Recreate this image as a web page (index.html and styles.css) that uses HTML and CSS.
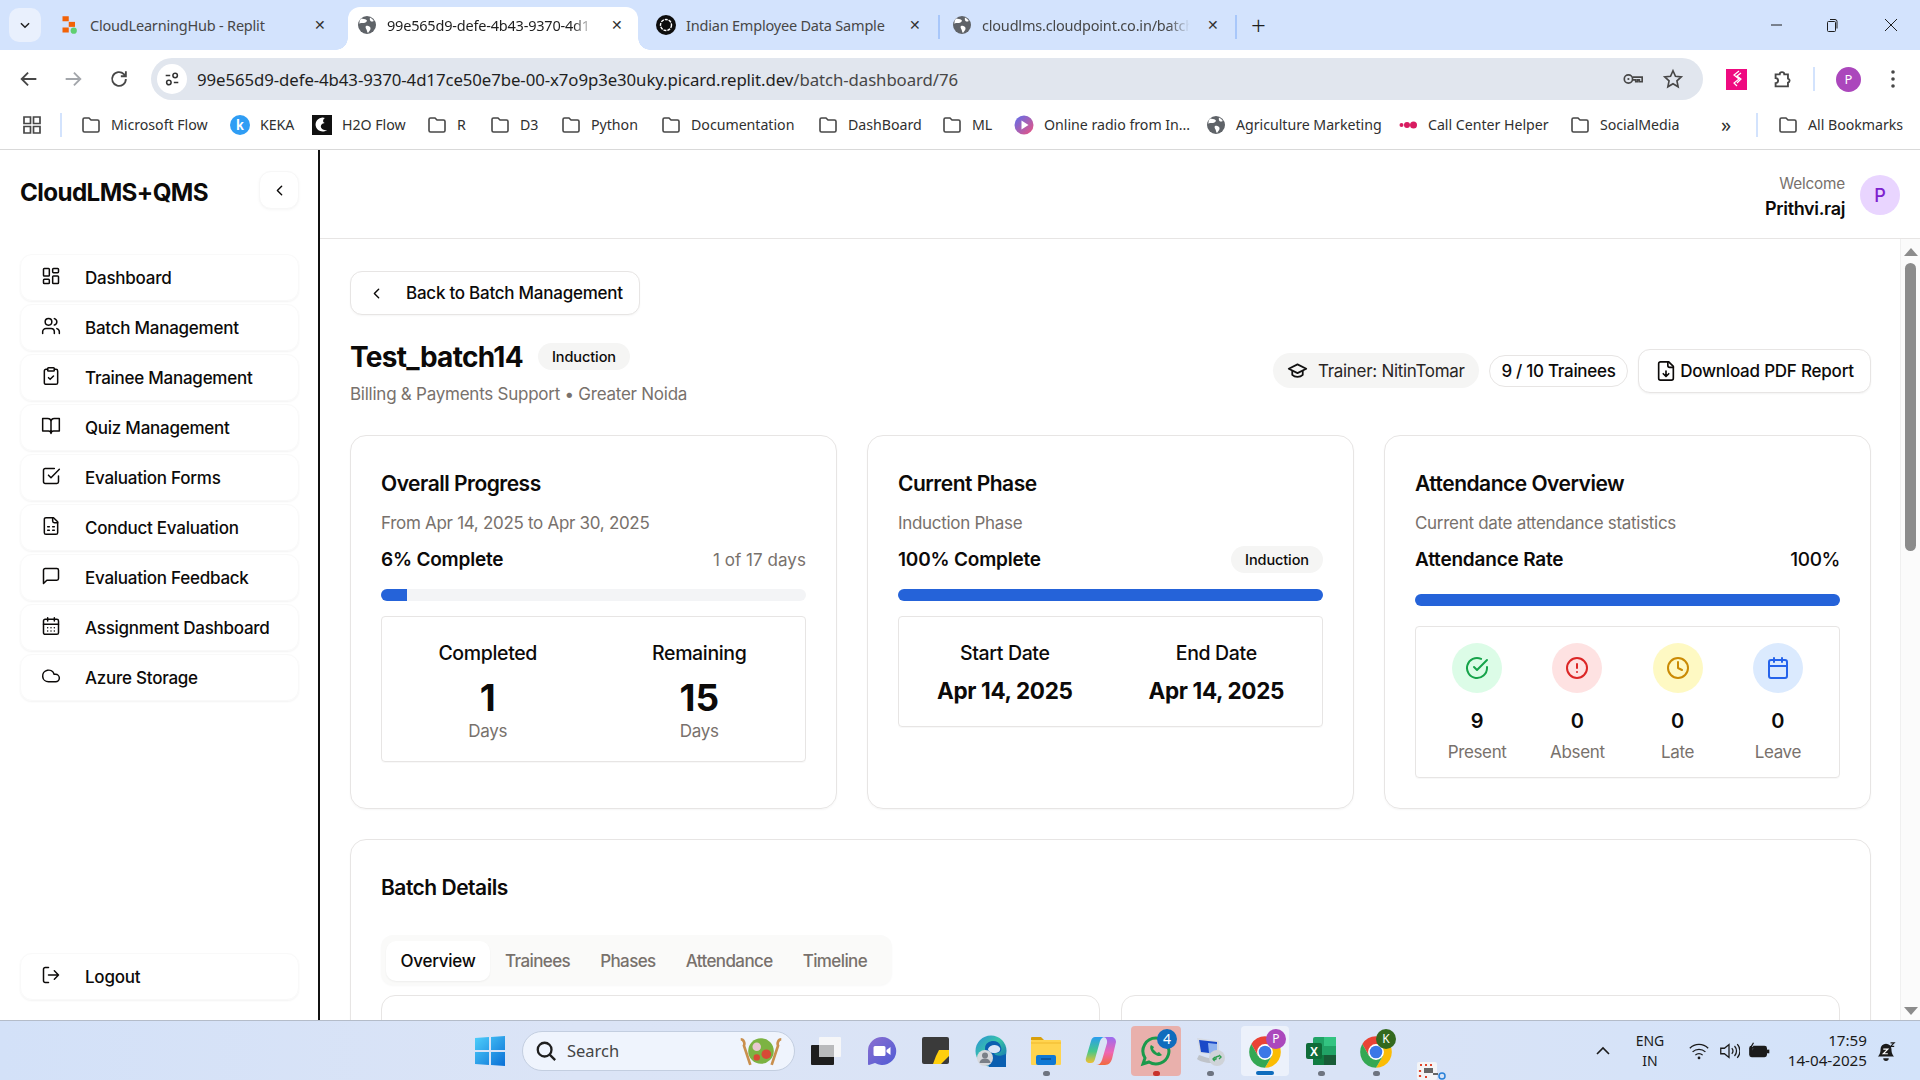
FILE: index.html
```html
<!DOCTYPE html>
<html lang="en">
<head>
<meta charset="utf-8">
<title>CloudLMS+QMS</title>
<link rel="stylesheet" href="styles.css">
</head>
<body>
<svg class="defs" aria-hidden="true">
  <symbol id="folder" viewBox="0 0 20 20"><path d="M2 4.5A1.5 1.5 0 0 1 3.5 3H8l2 2h6.500A1.500 1.500 0 0 1 18 6.500v9a1.500 1.500 0 0 1-1.500 1.500h-13A1.500 1.500 0 0 1 2 15.500z" fill="none" stroke="#474747" stroke-width="1.6"/></symbol>
  <symbol id="globe" viewBox="0 0 20 20"><circle cx="10" cy="10" r="9" fill="#5f6368"/><path d="M4 3.500c2 .5 4 0 5.500 1.500S8 8 6.500 8 3 7.500 2.500 9c-.3-2 .3-4 1.500-5.500zM9 11c2-.8 4 .2 4.500 2s-1.500 3.500-2.500 5c-1-1-1-2.500-1.500-3.500S8 12 9 11zM13 2.500c1.500.7 3 2 3.800 3.500-1 .5-2.500 1-3.300 0s-.8-2.500-.5-3.500z" fill="#fff"/></symbol>
  <symbol id="i-dash" viewBox="0 0 24 24"><rect x="3" y="3" width="7" height="9" rx="1"/><rect x="14" y="3" width="7" height="5" rx="1"/><rect x="14" y="12" width="7" height="9" rx="1"/><rect x="3" y="16" width="7" height="5" rx="1"/></symbol>
  <symbol id="i-users" viewBox="0 0 24 24"><path d="M16 21v-2a4 4 0 0 0-4-4H6a4 4 0 0 0-4 4v2"/><circle cx="9" cy="7" r="4"/><path d="M22 21v-2a4 4 0 0 0-3-3.870M16 3.130a4 4 0 0 1 0 7.750"/></symbol>
  <symbol id="i-clip" viewBox="0 0 24 24"><rect x="8" y="2" width="8" height="4" rx="1"/><path d="M16 4h2a2 2 0 0 1 2 2v14a2 2 0 0 1-2 2H6a2 2 0 0 1-2-2V6a2 2 0 0 1 2-2h2"/><path d="m9 14 2 2 4-4"/></symbol>
  <symbol id="i-book" viewBox="0 0 24 24"><path d="M2 3h6a4 4 0 0 1 4 4v14a3 3 0 0 0-3-3H2zM22 3h-6a4 4 0 0 0-4 4v14a3 3 0 0 1 3-3h7z"/></symbol>
  <symbol id="i-check" viewBox="0 0 24 24"><path d="m9 11 3 3L22 4"/><path d="M21 12v7a2 2 0 0 1-2 2H5a2 2 0 0 1-2-2V5a2 2 0 0 1 2-2h11"/></symbol>
  <symbol id="i-sheet" viewBox="0 0 24 24"><path d="M15 2H6a2 2 0 0 0-2 2v16a2 2 0 0 0 2 2h12a2 2 0 0 0 2-2V7Z"/><path d="M14 2v4a2 2 0 0 0 2 2h4M8 13h2M14 13h2M8 17h2M14 17h2"/></symbol>
  <symbol id="i-msg" viewBox="0 0 24 24"><path d="M21 15a2 2 0 0 1-2 2H7l-4 4V5a2 2 0 0 1 2-2h14a2 2 0 0 1 2 2z"/></symbol>
  <symbol id="i-cal-days" viewBox="0 0 24 24"><path d="M8 2v4M16 2v4"/><rect x="3" y="4" width="18" height="18" rx="2"/><path d="M3 10h18M8 14h.01M12 14h.01M16 14h.01M8 18h.01M12 18h.01M16 18h.01"/></symbol>
  <symbol id="i-cloud" viewBox="0 0 24 24"><path d="M17.500 19H9a7 7 0 1 1 6.710-9h1.790a4.500 4.500 0 1 1 0 9Z"/></symbol>
  <symbol id="i-logout" viewBox="0 0 24 24"><path d="M9 21H5a2 2 0 0 1-2-2V5a2 2 0 0 1 2-2h4M16 17l5-5-5-5M21 12H9"/></symbol>
  <symbol id="i-chev" viewBox="0 0 24 24"><path d="m15 18-6-6 6-6"/></symbol>
  <symbol id="chrome" viewBox="0 0 48 48"><path d="M6.680 14A20 20 0 0 1 41.320 14H24L15.340 29z" fill="#ea4335"/><path d="M41.320 14A20 20 0 0 1 24 44l8.660-15L24 14z" fill="#fbbc04"/><path d="M24 44A20 20 0 0 1 6.680 14l8.660 15h17.320z" fill="#34a853"/><circle cx="24" cy="24" r="10" fill="#fff"/><circle cx="24" cy="24" r="8" fill="#3b78e7"/></symbol>
</svg>

<header class="tabstrip">
  <button class="tab-menu"><svg width="14" height="14" viewBox="0 0 24 24" class="ic-dark"><path d="m5 9 7 7 7-7"/></svg></button>
  <div class="tab tab-one">
    <svg class="favicon" viewBox="0 0 16 16"><rect x="2" y="1" width="5" height="4" fill="#f26207"/><rect x="7" y="5.500" width="5" height="4" fill="#f26207"/><rect x="2" y="10" width="5" height="4" fill="#f26207"/><circle cx="11" cy="12.500" r="2.500" fill="#5fcf70"/></svg>
    <span class="tab-title">CloudLearningHub - Replit</span><span class="tab-x">✕</span>
  </div>
  <div class="tab tab-active">
    <svg class="favicon"><use href="#globe"/></svg>
    <span class="tab-title fade">99e565d9-defe-4b43-9370-4d1</span><span class="tab-x">✕</span>
  </div>
  <div class="tab tab-three">
    <svg class="favicon" viewBox="0 0 20 20"><circle cx="10" cy="10" r="10" fill="#0d0d0d"/><circle cx="10" cy="10" r="5.500" fill="none" stroke="#fff" stroke-width="1.400" stroke-dasharray="3 1"/></svg>
    <span class="tab-title">Indian Employee Data Sample</span><span class="tab-x">✕</span>
    <i class="tab-sep"></i>
  </div>
  <div class="tab tab-four">
    <svg class="favicon"><use href="#globe"/></svg>
    <span class="tab-title fade">cloudlms.cloudpoint.co.in/batch</span><span class="tab-x">✕</span>
    <i class="tab-sep"></i>
  </div>
  <span class="new-tab">+</span>
  <div class="win-ctrls">
    <svg viewBox="0 0 14 14"><path d="M1 7h11"/></svg>
    <svg viewBox="0 0 14 14"><rect x="2.500" y="3.500" width="8" height="10" rx="1"/><path d="M5 1.500h5a2 2 0 0 1 2 2v7"/></svg>
    <svg class="win-close" viewBox="0 0 14 14"><path d="M1 1l12 12M13 1 1 13"/></svg>
  </div>
</header>

<nav class="toolbar">
  <svg class="tb-ic tb-back" viewBox="0 0 24 24"><path d="M20 12H5M11 5l-7 7 7 7"/></svg>
  <svg class="tb-ic tb-fwd" viewBox="0 0 24 24"><path d="M4 12h15M13 5l7 7-7 7"/></svg>
  <svg class="tb-ic tb-reload" viewBox="0 0 24 24"><path d="M19.500 12a7.500 7.500 0 1 1-2.200-5.300L19.500 9M19.500 3.500V9H14"/></svg>
  <div class="omnibox">
    <span class="tune"><svg width="18" height="18" viewBox="0 0 20 20"><path d="M3 6h5M12 14h5" stroke="#333" stroke-width="1.700" fill="none"/><circle cx="13.500" cy="6" r="2.500" fill="none" stroke="#333" stroke-width="1.700"/><circle cx="6.500" cy="14" r="2.500" fill="none" stroke="#333" stroke-width="1.700"/></svg></span>
    <span class="url">99e565d9-defe-4b43-9370-4d17ce50e7be-00-x7o9p3e30uky.picard.replit.dev<span class="url-path">/batch-dashboard/76</span></span>
    <svg class="omni-key" viewBox="0 0 24 24"><circle cx="7" cy="12" r="4.500"/><circle cx="7" cy="12" r="1.200" fill="#474747" stroke="none"/><path d="M11.500 10H22v5h-3v-2h-2v2h-2v-2h-3.500"/></svg>
    <svg class="omni-star" viewBox="0 0 24 24"><path d="m12 3 2.700 6 6.300.7-4.700 4.300 1.300 6.500L12 17.200 6.400 20.500 7.700 14 3 9.700 9.300 9z"/></svg>
  </div>
  <div class="ext-pink"><svg width="14" height="18" viewBox="0 0 14 18"><path d="M9 1 4 5l5 4-5 4 3 3M11 3 7 6l4 3-4 4" fill="none" stroke="#fff" stroke-width="1.200"/></svg></div>
  <svg class="tb-ic tb-puzzle" viewBox="0 0 24 24"><path d="M5 7h4.500a2.500 2.500 0 0 1 5 0h4v4.500a2.300 2.300 0 0 1 0 4.500V20H5v-3.500a2.750 2.750 0 0 0 0-5.500z"/></svg>
  <i class="tb-sep"></i>
  <span class="tb-avatar">P</span>
  <svg class="tb-dots" viewBox="0 0 6 20"><circle cx="3" cy="3" r="1.800"/><circle cx="3" cy="10" r="1.800"/><circle cx="3" cy="17" r="1.800"/></svg>
</nav>

<div class="bookmarks">
  <svg class="bm-apps" viewBox="0 0 18 18"><path d="M1 1h6.500v6.500H1zM10.500 1H17v6.500h-6.500zM1 10.500h6.500V17H1zM10.500 10.500H17V17h-6.500z"/></svg>
  <i class="bm-sep"></i>
  <div class="bm-list">
    <a class="bm"><svg class="bm-ic"><use href="#folder"/></svg>Microsoft Flow</a>
    <a class="bm"><svg class="bm-ic" viewBox="0 0 20 20"><circle cx="10" cy="10" r="10" fill="#2f9df4"/><text x="10" y="14.500" text-anchor="middle" class="bm-k">k</text></svg>KEKA</a>
    <a class="bm"><svg class="bm-ic" viewBox="0 0 20 20"><rect width="20" height="20" fill="#111"/><path d="M13 3a7 7 0 1 0 2 12c-5 1-8-3-5-6 1-1 3-1 3-1-3-.5-2-4 0-5z" fill="#fff"/></svg>H2O Flow</a>
    <a class="bm"><svg class="bm-ic"><use href="#folder"/></svg>R</a>
    <a class="bm"><svg class="bm-ic"><use href="#folder"/></svg>D3</a>
    <a class="bm"><svg class="bm-ic"><use href="#folder"/></svg>Python</a>
    <a class="bm"><svg class="bm-ic"><use href="#folder"/></svg>Documentation</a>
    <a class="bm"><svg class="bm-ic"><use href="#folder"/></svg>DashBoard</a>
    <a class="bm"><svg class="bm-ic"><use href="#folder"/></svg>ML</a>
    <a class="bm"><svg class="bm-ic" viewBox="0 0 20 20"><defs><linearGradient id="radio" x1="0" y1="0" x2="1" y2="1"><stop offset="0" stop-color="#5a6ff0"/><stop offset="1" stop-color="#f0527c"/></linearGradient></defs><circle cx="10" cy="10" r="9.500" fill="url(#radio)"/><path d="M7.500 5.500v9l7-4.500z" fill="#fff"/></svg>Online radio from In...</a>
    <a class="bm"><svg class="bm-ic"><use href="#globe"/></svg>Agriculture Marketing</a>
    <a class="bm"><svg class="bm-ic" viewBox="0 0 20 20"><circle cx="3.500" cy="10" r="2" fill="#d81b60"/><circle cx="9" cy="10" r="3" fill="#d81b60"/><circle cx="15.500" cy="10" r="3.500" fill="#d81b60"/></svg>Call Center Helper</a>
    <a class="bm"><svg class="bm-ic"><use href="#folder"/></svg>SocialMedia</a>
  </div>
  <span class="bm-more">»</span>
  <i class="bm-sep"></i>
  <a class="bm bm-all"><svg class="bm-ic"><use href="#folder"/></svg>All Bookmarks</a>
</div>

<div class="app">
  <aside class="sidebar">
    <div class="brand">
      <span class="brand-name">CloudLMS+QMS</span>
      <button class="collapse"><svg class="ic ic-16"><use href="#i-chev"/></svg></button>
    </div>
    <ul class="nav">
      <li class="nav-item"><svg class="ic nav-ic"><use href="#i-dash"/></svg>Dashboard</li>
      <li class="nav-item"><svg class="ic nav-ic"><use href="#i-users"/></svg>Batch Management</li>
      <li class="nav-item"><svg class="ic nav-ic"><use href="#i-clip"/></svg>Trainee Management</li>
      <li class="nav-item"><svg class="ic nav-ic"><use href="#i-book"/></svg>Quiz Management</li>
      <li class="nav-item"><svg class="ic nav-ic"><use href="#i-check"/></svg>Evaluation Forms</li>
      <li class="nav-item"><svg class="ic nav-ic"><use href="#i-sheet"/></svg>Conduct Evaluation</li>
      <li class="nav-item"><svg class="ic nav-ic"><use href="#i-msg"/></svg>Evaluation Feedback</li>
      <li class="nav-item"><svg class="ic nav-ic"><use href="#i-cal-days"/></svg>Assignment Dashboard</li>
      <li class="nav-item"><svg class="ic nav-ic"><use href="#i-cloud"/></svg>Azure Storage</li>
    </ul>
    <div class="nav-item nav-logout"><svg class="ic nav-ic"><use href="#i-logout"/></svg>Logout</div>
  </aside>

  <div class="main">
    <div class="topbar">
      <div class="welcome"><span class="welcome-label">Welcome</span><span class="welcome-name">Prithvi.raj</span></div>
      <span class="avatar">P</span>
    </div>
    <div class="scroller">
      <div class="content">
        <button class="back-btn"><svg class="ic ic-16"><use href="#i-chev"/></svg>Back to Batch Management</button>
        <div class="page-head">
          <div>
            <div class="title-row"><h1>Test_batch14</h1><span class="badge badge-head">Induction</span></div>
            <p class="subtitle">Billing &amp; Payments Support • Greater Noida</p>
          </div>
          <div class="head-actions">
            <span class="pill-trainer"><svg class="cap" viewBox="0 0 24 24"><path d="M2 10l10-5 10 5-10 5z"/><path d="M6 12v5c3 3 9 3 12 0v-5"/></svg>Trainer: NitinTomar</span>
            <span class="pill-count">9 / 10 Trainees</span>
            <button class="download"><svg class="ic ic-22" viewBox="0 0 24 24"><path d="M15 2H6a2 2 0 0 0-2 2v16a2 2 0 0 0 2 2h12a2 2 0 0 0 2-2V7Z"/><path d="M14 2v4a2 2 0 0 0 2 2h4M12 18v-6M9 15l3 3 3-3"/></svg>Download PDF Report</button>
          </div>
        </div>

        <div class="cards">
          <section class="card">
            <h2>Overall Progress</h2>
            <p class="desc">From Apr 14, 2025 to Apr 30, 2025</p>
            <div class="row"><strong>6% Complete</strong><span class="muted">1 of 17 days</span></div>
            <div class="track"><div class="fill fill-six"></div></div>
            <div class="inner inner-two inner-tall">
              <div class="stat"><span class="stat-label">Completed</span><span class="stat-big">1</span><span class="muted">Days</span></div>
              <div class="stat"><span class="stat-label">Remaining</span><span class="stat-big">15</span><span class="muted">Days</span></div>
            </div>
          </section>
          <section class="card">
            <h2>Current Phase</h2>
            <p class="desc">Induction Phase</p>
            <div class="row"><strong>100% Complete</strong><span class="badge badge-phase">Induction</span></div>
            <div class="track"><div class="fill fill-full"></div></div>
            <div class="inner inner-two inner-short">
              <div class="stat"><span class="stat-label">Start Date</span><span class="stat-date">Apr 14, 2025</span></div>
              <div class="stat"><span class="stat-label">End Date</span><span class="stat-date">Apr 14, 2025</span></div>
            </div>
          </section>
          <section class="card">
            <h2>Attendance Overview</h2>
            <p class="desc">Current date attendance statistics</p>
            <div class="row row-att"><strong>Attendance Rate</strong><span class="pct">100%</span></div>
            <div class="track"><div class="fill fill-full"></div></div>
            <div class="inner inner-four">
              <div class="att"><span class="att-ic att-green"><svg class="ic ic-24" viewBox="0 0 24 24"><path d="M22 11.080V12a10 10 0 1 1-5.930-9.140"/><path d="M22 4 12 14.010l-3-3"/></svg></span><b>9</b><span class="muted">Present</span></div>
              <div class="att"><span class="att-ic att-red"><svg class="ic ic-24" viewBox="0 0 24 24"><circle cx="12" cy="12" r="10"/><path d="M12 8v4M12 16h.01"/></svg></span><b>0</b><span class="muted">Absent</span></div>
              <div class="att"><span class="att-ic att-yellow"><svg class="ic ic-24" viewBox="0 0 24 24"><circle cx="12" cy="12" r="10"/><path d="M12 6v6l4 2"/></svg></span><b>0</b><span class="muted">Late</span></div>
              <div class="att"><span class="att-ic att-blue"><svg class="ic ic-24" viewBox="0 0 24 24"><rect x="3" y="4" width="18" height="18" rx="2"/><path d="M16 2v4M8 2v4M3 10h18"/></svg></span><b>0</b><span class="muted">Leave</span></div>
            </div>
          </section>
        </div>

        <section class="card details">
          <h2>Batch Details</h2>
          <div class="tabs">
            <span class="tb tb-on">Overview</span><span class="tb">Trainees</span><span class="tb">Phases</span><span class="tb">Attendance</span><span class="tb">Timeline</span>
          </div>
          <div class="detail-grid"><div class="detail-card"></div><div class="detail-card"></div></div>
        </section>
      </div>
      <div class="scrollbar">
        <span class="sb-up"></span>
        <span class="sb-thumb"></span>
        <span class="sb-down"></span>
      </div>
    </div>
  </div>
</div>

<footer class="taskbar">
  <div class="task-center">
    <svg class="t-win" viewBox="0 0 30 30"><defs><linearGradient id="wn" x1="0" y1="0" x2="1" y2="1"><stop offset="0" stop-color="#4fd0fb"/><stop offset="1" stop-color="#0a6fd6"/></linearGradient></defs><path d="M0 2l14-1v13H0zM16 1l14-1v14H16zM0 16h14v13L0 28zM16 16h14v14l-14-1z" fill="url(#wn)"/></svg>
    <div class="search">
      <svg width="22" height="22" viewBox="0 0 24 24" class="ic-dark"><circle cx="10.500" cy="10.500" r="7.500"/><path d="m16 16 6 6"/></svg>
      <span>Search</span>
      <svg class="salad" viewBox="0 0 46 30"><path d="M4 4c3 0 4 4 3 6l6 18M42 4c-3 0-4 4-3 6l-6 18" stroke="#c98f4e" stroke-width="2.500" fill="none"/><circle cx="23" cy="15" r="12" fill="#7cb342"/><circle cx="19" cy="11" r="4" fill="#e8c8d0"/><circle cx="28" cy="18" r="4.500" fill="#d84a36"/><circle cx="19" cy="21" r="3" fill="#d84a36"/></svg>
    </div>
    <div class="t-slot"><svg class="t-ic" viewBox="0 0 32 32"><rect x="1" y="10" width="23" height="20" rx="1" fill="#1e1e1e"/><rect x="9" y="2" width="22" height="20" rx="1" fill="#f5f6f8"/><rect x="9" y="10" width="15" height="12" fill="#b9babc"/></svg></div>
    <div class="t-slot"><svg class="t-ic" viewBox="0 0 32 32"><defs><linearGradient id="mt" x1="0" y1="0" x2="1" y2="1"><stop offset="0" stop-color="#8b6fd0"/><stop offset="1" stop-color="#4f5bd5"/></linearGradient></defs><path d="M17 2a14 14 0 1 1-7 26l-6 2c-.6 0-1-.5-1-1v-13A14 14 0 0 1 17 2z" fill="url(#mt)"/><path d="M10 11h9a1.500 1.500 0 0 1 1.500 1.500v7A1.500 1.500 0 0 1 19 21h-9a1.500 1.500 0 0 1-1.500-1.500v-7A1.500 1.500 0 0 1 10 11zM21.500 15l4-3v8l-4-3z" fill="#fff"/></svg></div>
    <div class="t-slot"><svg class="t-ic" viewBox="0 0 32 32"><rect x="2" y="2" width="27" height="27" rx="2" fill="#3a3a3a"/><path d="M29 15v6l-8 8h-8l3-8 3-6z" fill="#ffcf0d"/></svg></div>
    <div class="t-slot"><svg class="t-ic" viewBox="0 0 32 32"><defs><linearGradient id="ed" x1="0" y1="0" x2="1" y2="1"><stop offset="0" stop-color="#2a8fd8"/><stop offset=".45" stop-color="#38c5a8"/><stop offset="1" stop-color="#0b5fb0"/></linearGradient></defs><circle cx="16" cy="16" r="15.500" fill="url(#ed)"/><path d="M10 14a8 7 0 0 1 16-2c2 5-3 7-7 6 1 3 6 4 12 1v13H14z" fill="#0b5fb0"/><path d="M13 14c2-5 10-5 12-1 1 3-2 5-6 5-3 0-6-2-6-4z" fill="#d9e4f7"/><path d="M24 22c3 1 5 0 7-1l-1 6-8 4z" fill="#0b5fb0"/><circle cx="10" cy="23" r="8" fill="#d6d8dc"/><circle cx="10" cy="20.500" r="3" fill="#7a7f87"/><path d="M4.500 28a5.500 4.500 0 0 1 11 0z" fill="#7a7f87"/></svg></div>
    <div class="t-slot t-dot"><svg class="t-ic" viewBox="0 0 32 32"><path d="M1 3a1 1 0 0 1 1-1h9l3 3h-13z" fill="#d9a00b"/><rect x="1" y="5" width="30" height="25" rx="1" fill="#ffd44f"/><path d="M1 8h30" stroke="#f0b92f"/><rect x="6" y="20" width="20" height="10" rx="2" fill="#0f78d4"/><path d="M11 24h10" stroke="#0a4f95" stroke-width="1.500"/></svg></div>
    <div class="t-slot"><svg class="t-ic" viewBox="0 0 32 32"><defs><linearGradient id="co" x1="0" y1="0" x2="0" y2="1"><stop offset="0" stop-color="#9a6cf0"/><stop offset=".55" stop-color="#ee66b4"/><stop offset="1" stop-color="#f26b3c"/></linearGradient><linearGradient id="co2" x1="0" y1="0" x2="0" y2="1"><stop offset="0" stop-color="#2a9df0"/><stop offset=".55" stop-color="#46c88a"/><stop offset="1" stop-color="#f0c030"/></linearGradient></defs><path d="M10 2h10c-3 0-4 2-5 4l-5 18c-1 3-2 4-4 4H5c-3 0-5-2-4-5L6 6c1-3 2-4 4-4z" fill="url(#co2)"/><path d="M18 2h8c3 0 5 2 5 5l-4 17c-1 3-3 6-7 6H11c3 0 5-2 6-5l5-17c.7-3-1-6-4-6z" fill="url(#co)"/></svg></div>
    <div class="t-slot t-whatsapp t-dot-red">
      <svg class="t-ic" viewBox="0 0 32 32"><path d="M16 3a13 13 0 0 0-11 20l-2 6 6-2a13 13 0 1 0 7-24z" fill="none" stroke="#1b9a4b" stroke-width="3"/><path d="M11 10c-2 2 0 7 3 9s6 3 8 1l-3-3-2 1-4-4 1-2z" fill="#1b9a4b"/></svg>
      <span class="t-badge badge-4">4</span>
    </div>
    <div class="t-slot t-dot"><svg class="t-ic" viewBox="0 0 32 32"><path d="M3 3l22 3v15L6 18z" fill="#d6dbe4"/><path d="M5 5l18 2v12L7 17z" fill="#1a49c8"/><path d="M14 8l9 1v10l-8-1z" fill="#8fb2ef"/><path d="M5 20c5 2 10 3 14 4l-2 4c-5 0-12-2-14-4z" fill="#bfc3c9"/><circle cx="23" cy="23" r="8" fill="#cfd3d8"/><path d="M19 25l3-1v-2l3-1M21 22l-2 2 2 2M25 20l2 2-2 2" stroke="#2e9e4f" stroke-width="1.400" fill="none"/></svg></div>
    <div class="t-slot t-chrome t-bar">
      <svg class="t-ic t-ic-chrome"><use href="#chrome"/></svg>
      <span class="t-badge badge-p">P</span>
    </div>
    <div class="t-slot t-dot"><svg class="t-ic" viewBox="0 0 32 32"><rect x="8" y="2" width="23" height="28" rx="2" fill="#21a366"/><rect x="19" y="2" width="12" height="9" fill="#33c481"/><rect x="19" y="20" width="12" height="10" fill="#185c37"/><rect x="8" y="20" width="11" height="10" fill="#107c41"/><rect x="1" y="8" width="16" height="16" rx="2" fill="#0f6b38"/><text x="9" y="20.500" text-anchor="middle" class="t-x">X</text></svg></div>
    <div class="t-slot t-dot">
      <svg class="t-ic t-ic-chrome"><use href="#chrome"/></svg>
      <span class="t-badge badge-k">K</span>
    </div>
    <svg class="t-mini" viewBox="0 0 30 18"><rect x="0" y="0" width="20" height="18" rx="2" fill="#f3f4f6"/><path d="M3 3h2M8 3h2M13 3h2M3 8v2M3 13v2M8 15h2" stroke="#e0452c" stroke-width="2.200"/><rect x="7" y="6" width="9" height="5" fill="#666"/><path d="M16 12h5" stroke="#666" stroke-width="2"/><circle cx="25" cy="14" r="3" fill="none" stroke="#2a82d8" stroke-width="1.500"/></svg>
  </div>
  <div class="tray">
    <svg class="tray-chev" viewBox="0 0 16 10"><path d="M2 8l6-6 6 6"/></svg>
    <div class="lang"><span>ENG</span><span>IN</span></div>
    <svg class="tray-ic wifi" viewBox="0 0 24 20"><path d="M2 7a14 14 0 0 1 20 0M5 11a10 10 0 0 1 14 0M8 14.500a6 6 0 0 1 8 0"/><circle cx="12" cy="17.500" r="1.500" fill="#1b1b1b" stroke="none"/></svg>
    <svg class="tray-ic vol" viewBox="0 0 24 20"><path d="M3 7h4l5-4v14l-5-4H3zM15 7a4 4 0 0 1 0 6M18 4.500a8 8 0 0 1 0 11M21 2.500a11 11 0 0 1 0 15"/></svg>
    <svg class="tray-ic bat" viewBox="0 0 24 20"><rect x="2" y="5" width="18" height="11" rx="2" fill="#1b1b1b" stroke="#1b1b1b"/><path d="M22 8.500v4" stroke-width="2.500"/><path d="M6 1 3 6h4l-2 4" stroke="#1b1b1b" fill="#d3e3fa"/></svg>
    <div class="clock"><span>17:59</span><span>14-04-2025</span></div>
    <svg class="tray-ic bell" viewBox="0 0 24 22"><path d="M12 3a6 6 0 0 0-6 6c0 5-2 7-3 8h18c-1-1-3-3-3-8a6 6 0 0 0-6-6z" fill="#1b1b1b"/><path d="M9 19a3 3 0 0 0 6 0" fill="#1b1b1b"/><path d="M9 9h5l-5 5h5" stroke="#fff" stroke-width="1.300" fill="none"/><path d="M17 2h4l-4 4h4" stroke="#1b1b1b" stroke-width="1.300" fill="none"/></svg>
  </div>
</footer>
</body>
</html>
```
FILE: styles.css
```css
* { box-sizing: border-box; }
html, body { margin: 0; height: 100%; }
body { width: 1920px; height: 1080px; overflow: hidden; display: flex; flex-direction: column; font-family: Inter, "Liberation Sans", sans-serif; color: #0c0a09; background: #fff; }
button { font: inherit; color: inherit; background: #fff; cursor: pointer; }
h1, h2, p, ul { margin: 0; padding: 0; }
.defs { width: 0; height: 0; position: absolute; }

/* Browser chrome */
.tabstrip, .toolbar, .bookmarks, .lang, .clock { font-family: "Noto Sans", "Open Sans", sans-serif; }
.tabstrip { height: 50px; flex: none; background: #d3e3fd; display: flex; align-items: flex-end; padding-left: 9px; position: relative; }
.tab-menu { width: 32px; height: 34px; margin-bottom: 8px; border: 0; border-radius: 10px; background: #e9f0fd; display: flex; align-items: center; justify-content: center; padding: 0; }
.ic-dark { fill: none; stroke: #1f1f1f; stroke-width: 2.500; }
.tab { height: 43px; display: flex; align-items: center; padding: 0 15px 8px 18px; font-size: 14.500px; color: #474747; position: relative; flex: none; }
.tab-one { margin-left: 8px; width: 307px; padding-left: 11px; padding-right: 25px; }
.tab-active { background: #fff; border-radius: 12px 12px 0 0; color: #1f1f1f; width: 290px; padding-left: 9px; padding-right: 10px; margin-left: -8px; }
.tab-active::before, .tab-active::after { content: ""; position: absolute; bottom: 0; width: 12px; height: 12px; background: radial-gradient(circle at 0 0, transparent 11.500px, #fff 12px); }
.tab-active::before { left: -12px; }
.tab-active::after { right: -12px; background: radial-gradient(circle at 100% 0, transparent 11.500px, #fff 12px); }
.tab-three { width: 303px; }
.tab-four { width: 297px; padding-left: 11px; }
.favicon { width: 20px; height: 20px; flex: none; margin-right: 10px; }
.tab-title { flex: 1; white-space: nowrap; letter-spacing: -.2px; }
.fade { -webkit-mask-image: linear-gradient(90deg, #000 88%, transparent 98%); mask-image: linear-gradient(90deg, #000 88%, transparent 98%); }
.tab-x { width: 22px; text-align: center; font-size: 14px; flex: none; color: #333; margin-left: 8px; }
.tab-sep { position: absolute; right: 1px; top: 8px; height: 24px; width: 2px; background: #a8c7fa; }
.new-tab { font-size: 26px; font-weight: 300; color: #1f1f1f; margin: 0 0 7px 13px; line-height: 36px; }
.win-ctrls { margin-left: auto; display: flex; gap: 41px; margin-bottom: 18px; padding-right: 22px; }
.win-ctrls svg { width: 14px; height: 14px; fill: none; stroke: #1f1f1f; stroke-width: 1; }
.win-ctrls .win-close { margin-left: 4px; }

.toolbar { height: 50px; flex: none; background: #fff; border-radius: 12px 12px 0 0; display: flex; align-items: center; position: relative; padding-left: 18px; padding-top: 8px; }
.tb-ic { width: 22px; height: 22px; fill: none; stroke: #474747; stroke-width: 2; flex: none; }
.tb-fwd { stroke: #a3a6ab; margin-left: 22px; }
.tb-reload { margin-left: 24px; }
.omnibox { width: 1552px; height: 42px; margin-left: 21px; border-radius: 21px; background: #e1e6ee; display: flex; align-items: center; padding: 0 19px 0 6px; flex: none; }
.tune { width: 30px; height: 30px; border-radius: 50%; background: #fff; display: flex; align-items: center; justify-content: center; flex: none; }
.url { margin-left: 10px; font-size: 16.800px; color: #1f1f1f; letter-spacing: -.08px; white-space: nowrap; flex: 1; }
.url-path { color: #474747; }
.omni-key, .omni-star { width: 22px; height: 22px; fill: none; stroke: #474747; stroke-width: 1.800; flex: none; }
.omni-star { margin-left: 18px; }
.ext-pink { width: 21px; height: 21px; background: #ef0a80; margin-left: 23px; display: flex; align-items: center; justify-content: center; flex: none; }
.tb-puzzle { margin-left: 24px; }
.tb-sep { width: 2px; height: 24px; background: #d3e3fd; margin-left: 20px; flex: none; }
.tb-avatar { width: 25px; height: 25px; border-radius: 50%; background: #ab47bc; color: #fff; font-size: 13px; display: flex; align-items: center; justify-content: center; margin-left: 21px; flex: none; }
.tb-dots { width: 6px; height: 20px; fill: #474747; margin-left: 29px; flex: none; }

.bookmarks { height: 50px; flex: none; background: #fff; display: flex; align-items: center; padding-left: 23px; border-bottom: 1px solid #d9d9d9; font-size: 14.200px; color: #303030; }
.bm-apps { width: 18px; height: 18px; fill: none; stroke: #474747; stroke-width: 1.700; flex: none; }
.bm-sep { width: 2px; height: 24px; background: #d3e3fd; margin-left: 19px; flex: none; }
.bm-list { width: 1634px; margin-left: 19px; display: grid; grid-template-columns: 149px 82px 115px 63px 71px 100px 157px 124px 72px 192px 192px 172px 1fr; }
.bm { display: flex; align-items: center; white-space: nowrap; letter-spacing: -.03px; }
.bm-ic { width: 20px; height: 20px; margin-right: 10px; flex: none; }
.bm-k { font: bold 14px "Liberation Sans", sans-serif; fill: #fff; }
.bm-more { font-size: 20px; width: 22px; margin-left: 0; text-align: center; line-height: 20px; }
.bm-all { margin-left: 20px; }

/* App */
.app { flex: 1; min-height: 0; display: flex; overflow: hidden; background: #fff; }
.sidebar { width: 320px; flex: none; border-right: 2px solid #111; padding: 0 19px 0 20px; display: flex; flex-direction: column; }
.brand { height: 104px; display: flex; align-items: center; justify-content: space-between; padding-bottom: 20px; }
.brand-name { font-size: 24.200px; font-weight: 700; letter-spacing: -.6px; }
.collapse { width: 40px; height: 38px; border: 1px solid #f7f7f7; border-radius: 12px; box-shadow: 0 1px 3px rgba(0,0,0,.04); display: flex; align-items: center; justify-content: center; padding: 0; margin-bottom: 4px; }
.nav { list-style: none; display: flex; flex-direction: column; gap: 3px; }
.nav-item { height: 47px; border: 1px solid #f9f9f9; border-radius: 12px; box-shadow: 0 1px 2px rgba(0,0,0,.05); display: flex; align-items: center; padding-left: 20px; font-size: 17px; font-weight: 500; letter-spacing: -.25px; }
.nav-logout { margin-top: auto; margin-bottom: 20px; }
.ic { fill: none; stroke: currentColor; stroke-width: 2; stroke-linecap: round; stroke-linejoin: round; flex: none; }
.ic-16 { width: 17px; height: 17px; }
.ic-22 { width: 22px; height: 22px; stroke-width: 1.800; }
.ic-24 { width: 24px; height: 24px; }
.nav-ic { width: 20px; height: 20px; margin: 0 24px 3px 0; stroke-width: 1.800; }

.main { flex: 1; min-width: 0; display: flex; flex-direction: column; }
.topbar { height: 89px; flex: none; border-bottom: 1px solid #e7e5e4; display: flex; align-items: center; justify-content: flex-end; padding: 2px 20px 0 0; gap: 15px; }
.welcome { display: flex; flex-direction: column; align-items: flex-end; margin-top: 3px; }
.welcome-label { font-size: 15.300px; color: #78716c; line-height: 24px; letter-spacing: -.2px; }
.welcome-name { font-size: 18px; font-weight: 600; line-height: 26px; letter-spacing: -.35px; }
.avatar { width: 40px; height: 40px; border-radius: 50%; background: #e9d5ff; color: #7e22ce; display: flex; align-items: center; justify-content: center; font-weight: 500; font-size: 18px; }
.scroller { flex: 1; min-height: 0; display: flex; overflow: hidden; }
.content { flex: 1; min-width: 0; padding: 32px 29px 0 30px; }

.back-btn { height: 44px; width: 290px; border: 1px solid #e7e5e4; border-radius: 12px; display: flex; align-items: center; padding: 0 0 0 17px; gap: 21px; font-size: 17px; font-weight: 500; letter-spacing: -.25px; box-shadow: 0 1px 2px rgba(0,0,0,.04); }
.page-head { display: flex; justify-content: space-between; align-items: flex-start; margin-top: 21.500px; }
.title-row { display: flex; align-items: center; gap: 15px; height: 40px; }
h1 { font-size: 28px; font-weight: 700; letter-spacing: -.7px; line-height: 40px; }
.badge { background: #f5f5f4; border-radius: 14px; font-weight: 500; display: inline-flex; align-items: center; justify-content: center; font-size: 14.500px; letter-spacing: -.1px; }
.badge-head { width: 92px; height: 27px; }
.subtitle { font-size: 17px; color: #78716c; margin-top: 5.500px; line-height: 24px; letter-spacing: -.25px; }
.head-actions { display: flex; align-items: center; gap: 10px; margin-top: 12px; height: 44px; }
.pill-trainer { width: 206px; height: 35px; border-radius: 18px; background: #f5f5f4; display: flex; align-items: center; padding-left: 14px; gap: 10px; font-size: 17px; color: #292524; letter-spacing: -.3px; }
.cap { width: 21px; height: 21px; fill: none; stroke: #111; stroke-width: 2; stroke-linejoin: round; }
.pill-count { width: 139px; height: 32px; border: 1px solid #e7e5e4; border-radius: 16px; display: flex; align-items: center; justify-content: center; font-size: 17px; font-weight: 500; letter-spacing: -.3px; }
.download { width: 233px; height: 44px; border: 1px solid #e7e5e4; border-radius: 12px; display: flex; align-items: center; justify-content: center; gap: 3px; font-size: 17px; font-weight: 500; letter-spacing: -.22px; box-shadow: 0 1px 2px rgba(0,0,0,.05); padding: 0; }

.cards { display: grid; grid-template-columns: repeat(3, 487px); gap: 30px; margin-top: 29px; }
.card { height: 374px; border: 1px solid #e7e5e4; border-radius: 16px; padding: 31px 30px 30px; box-shadow: 0 1px 2px rgba(0,0,0,.04); }
h2 { font-size: 21px; font-weight: 600; line-height: 34px; letter-spacing: -.5px; }
.desc { font-size: 17px; color: #78716c; margin-top: 7.500px; line-height: 28px; letter-spacing: -.3px; }
.row { display: flex; justify-content: space-between; align-items: center; height: 28px; margin-top: 9px; font-size: 19px; letter-spacing: -.2px; }
.row strong { font-weight: 600; }
.row .muted { font-size: 17px; letter-spacing: .05px; }
.pct { font-weight: 500; letter-spacing: -.4px; }
.badge-phase { width: 92px; height: 27px; font-size: 14.500px; }
.muted { color: #78716c; font-size: 17px; letter-spacing: -.25px; }
.track { height: 12px; background: #f3f4f6; border-radius: 6px; overflow: hidden; margin-top: 15px; }
.row-att + .track { margin-top: 20px; }
.fill { height: 100%; background: #2563d9; }
.fill-six { width: 6%; }
.fill-full { width: 100%; }
.inner { border: 1px solid #e7e5e4; border-radius: 4px; margin-top: 15.500px; box-shadow: 0 1px 1px rgba(0,0,0,.03); }
.inner-two { display: grid; grid-template-columns: 1fr 1fr; padding: 22px 0 0; }
.inner-tall { height: 146px; }
.inner-short { height: 111px; }
.stat { display: flex; flex-direction: column; align-items: center; }
.stat-label { font-size: 19.500px; font-weight: 500; line-height: 28px; letter-spacing: -.35px; }
.stat-big { font-size: 37px; font-weight: 700; line-height: 50px; margin-top: 5.500px; }
.stat-date { font-size: 22.500px; font-weight: 700; line-height: 32px; margin-top: 8px; letter-spacing: -.35px; }
.stat .muted { line-height: 24px; margin-top: -4px; }
.inner-four { display: grid; grid-template-columns: repeat(4, 1fr); height: 152px; margin-top: 20px; padding: 16px 11px 0; }
.att { display: flex; flex-direction: column; align-items: center; }
.att-ic { width: 50px; height: 50px; border-radius: 50%; display: flex; align-items: center; justify-content: center; }
.att-green { background: #dcfce7; color: #16a34a; }
.att-red { background: #fee2e2; color: #dc2626; }
.att-yellow { background: #fef9c3; color: #ca8a04; }
.att-blue { background: #dbeafe; color: #2563eb; }
.att b { font-size: 20px; font-weight: 600; line-height: 30px; margin-top: 13px; }
.att .muted { line-height: 24px; margin-top: 4px; letter-spacing: -.35px; }

.details { width: 1521px; margin-top: 30px; height: 500px; }
.tabs { width: 511px; height: 50px; margin-top: 30px; background: #fafaf9; border-radius: 12px; display: flex; align-items: center; padding: 1px 0 0 5px; font-size: 17px; font-weight: 500; color: #78716c; box-shadow: 0 1px 2px rgba(0,0,0,.03); letter-spacing: -.6px; }
.tb { padding: 0 15px; height: 40px; display: flex; align-items: center; border-radius: 10px; }
.tb-on { background: #fff; color: #0c0a09; width: 104px; justify-content: center; padding: 0; box-shadow: 0 1px 2px rgba(0,0,0,.05); letter-spacing: -.25px; }
.detail-grid { display: grid; grid-template-columns: 1fr 1fr; gap: 21px; margin-top: 10px; }
.detail-card { height: 200px; border: 1px solid #e7e5e4; border-radius: 14px; }

.scrollbar { width: 20px; flex: none; background: #fbfbfb; position: relative; display: flex; flex-direction: column; align-items: center; border-left: 1px solid #f0f0f0; }
.sb-up, .sb-down { position: absolute; width: 0; height: 0; border-left: 7px solid transparent; border-right: 7px solid transparent; }
.sb-up { top: 9px; border-bottom: 8px solid #8c8c8c; }
.sb-down { bottom: 5px; border-top: 8px solid #8c8c8c; }
.sb-thumb { position: absolute; top: 24px; width: 11px; height: 288px; border-radius: 6px; background: #8c8c8c; }

/* Windows taskbar */
.taskbar { height: 60px; flex: none; background: linear-gradient(90deg, #d3e1f8, #dbe4f6 30%, #d9e3f6 70%, #d3e3fa); border-top: 1px solid #b4bcc9; display: flex; align-items: center; position: relative; }
.task-center { display: flex; align-items: center; margin-left: 475px; position: relative; height: 100%; }
.t-win { width: 30px; height: 30px; flex: none; }
.search { width: 273px; height: 40px; margin-left: 17px; border-radius: 20px; background: #eff4fd; border: 1px solid #c3cee0; display: flex; align-items: center; padding-left: 12px; gap: 10px; font-family: "Noto Sans", sans-serif; font-size: 16.500px; color: #444; margin-right: 3px; }
.salad { width: 50px; height: 32px; margin-left: auto; margin-right: 8px; }
.t-slot { width: 55px; height: 50px; display: flex; align-items: center; justify-content: center; position: relative; flex: none; }
.t-ic { width: 32px; height: 32px; flex: none; }
.t-ic-chrome { width: 38px; height: 38px; margin-top: 2px; }
.t-whatsapp { width: 50px; margin: 0 1px 0 3px; background: #e9b0ac; border-radius: 4px; }
.t-chrome { width: 48px; margin: 0 4px; background: #ecf1fb; border-radius: 4px; }
.t-dot::after, .t-dot-red::after, .t-bar::after { content: ""; position: absolute; bottom: 0; left: 50%; width: 7px; height: 5px; margin-left: -3px; border-radius: 3px; background: #6e7480; }
.t-dot-red::after { background: #c8322c; }
.t-bar::after { width: 18px; height: 4px; margin-left: -9px; border-radius: 2px; background: #0f6cbd; bottom: 1px; }
.t-badge { position: absolute; width: 20px; height: 20px; border-radius: 50%; top: 3px; display: flex; align-items: center; justify-content: center; color: #fff; font: 12px "Noto Sans", sans-serif; }
.badge-4 { background: #0f6cbd; font-size: 14px; right: 4px; }
.badge-p { background: #ab47bc; right: 3px; }
.badge-k { background: #33691e; right: 7px; }
.t-x { font: bold 12px "Liberation Sans", sans-serif; fill: #fff; }
.t-mini { position: absolute; left: 942px; bottom: 0; width: 30px; height: 18px; }

.tray { position: absolute; top: 0; left: 1595px; right: 0; height: 100%; display: flex; align-items: center; color: #1b1b1b; }
.tray-chev { width: 16px; height: 10px; fill: none; stroke: #1b1b1b; stroke-width: 1.600; }
.lang { display: flex; flex-direction: column; align-items: center; font-size: 14px; line-height: 20px; width: 40px; margin-left: 19px; }
.tray-ic { width: 22px; height: 20px; fill: none; stroke: #1b1b1b; stroke-width: 1.400; flex: none; }
.wifi { margin-left: 18px; }
.vol { margin-left: 8px; }
.bat { margin-left: 8px; }
.clock { display: flex; flex-direction: column; align-items: flex-end; font-size: 15.200px; line-height: 20px; width: 97px; margin-top: -2px; }
.bell { margin-left: 8px; stroke: none; }
.bell path[stroke] { stroke-width: 1.300; }
```
